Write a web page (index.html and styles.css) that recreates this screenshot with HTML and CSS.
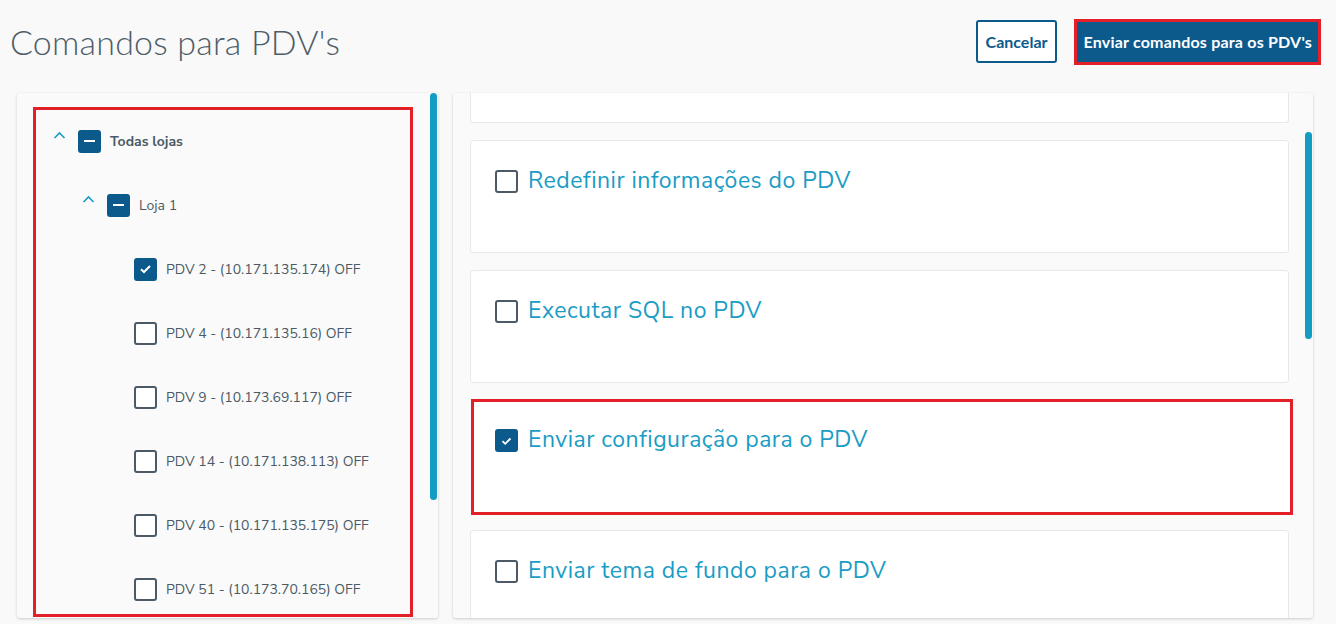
FILE: index.html
```html
<!DOCTYPE html>
<html lang="pt-BR">
<head>
  <meta charset="UTF-8" />
  <title>Comandos para PDV's</title>
  <link rel="stylesheet" href="styles.css">
</head>
<body>

  <!-- Cabeçalho -->
  <header class="top">
    <h1 class="title">Comandos para PDV's</h1>
    <div class="actions">
      <button class="btn btn-outline">Cancelar</button>
      <div class="mark mark-btn">
        <button class="btn btn-primary">Enviar comandos para os PDV's</button>
      </div>
    </div>
  </header>

  <main class="content">

    <!-- Árvore de lojas -->
    <section class="panel panel-left">
      <div class="mark mark-tree">
        <div class="tree-row lvl-0">
          <span class="chev"><svg width="13" height="8" viewBox="0 0 13 8"><path d="M1.5 7 L6.5 2 L11.5 7" fill="none" stroke="#1a9cc4" stroke-width="1.6"/></svg></span>
          <span class="box box-fill"><i class="minus"></i></span>
          <span class="tree-label strong">Todas lojas</span>
        </div>
        <div class="tree-row lvl-1">
          <span class="chev"><svg width="13" height="8" viewBox="0 0 13 8"><path d="M1.5 7 L6.5 2 L11.5 7" fill="none" stroke="#1a9cc4" stroke-width="1.6"/></svg></span>
          <span class="box box-fill"><i class="minus"></i></span>
          <span class="tree-label">Loja 1</span>
        </div>
        <div class="tree-row lvl-2">
          <span class="box box-fill"><svg width="13" height="10" viewBox="0 0 13 10"><path d="M2 5.2 L5 8 L11 2" fill="none" stroke="#fff" stroke-width="2"/></svg></span>
          <span class="tree-label">PDV 2 - (10.171.135.174) OFF</span>
        </div>
        <div class="tree-row lvl-2">
          <span class="box"></span>
          <span class="tree-label">PDV 4 - (10.171.135.16) OFF</span>
        </div>
        <div class="tree-row lvl-2">
          <span class="box"></span>
          <span class="tree-label">PDV 9 - (10.173.69.117) OFF</span>
        </div>
        <div class="tree-row lvl-2">
          <span class="box"></span>
          <span class="tree-label">PDV 14 - (10.171.138.113) OFF</span>
        </div>
        <div class="tree-row lvl-2">
          <span class="box"></span>
          <span class="tree-label">PDV 40 - (10.171.135.175) OFF</span>
        </div>
        <div class="tree-row lvl-2">
          <span class="box"></span>
          <span class="tree-label">PDV 51 - (10.173.70.165) OFF</span>
        </div>
      </div>
      <span class="scroll scroll-left"></span>
    </section>

    <!-- Lista de comandos -->
    <section class="panel panel-right">
      <div class="cmd-list">
        <div class="cmd cmd-cut"></div>
        <div class="cmd">
          <span class="box"></span>
          <span class="cmd-label">Redefinir informações do PDV</span>
        </div>
        <div class="cmd">
          <span class="box"></span>
          <span class="cmd-label">Executar SQL no PDV</span>
        </div>
        <div class="cmd cmd-marked">
          <span class="box box-fill"><svg width="13" height="10" viewBox="0 0 13 10"><path d="M2.5 5.2 L5.2 7.8 L10.5 2.5" fill="none" stroke="#fff" stroke-width="1.8"/></svg></span>
          <span class="cmd-label">Enviar configuração para o PDV</span>
        </div>
        <div class="cmd">
          <span class="box"></span>
          <span class="cmd-label">Enviar tema de fundo para o PDV</span>
        </div>
      </div>
      <span class="scroll scroll-right"></span>
    </section>

  </main>
</body>
</html>
```

FILE: styles.css
```css
/* Общие настройки */
*, *::before, *::after { box-sizing: border-box; }
html, body { height: 100%; }
body {
  margin: 0;
  background: #f9f9f9;
  overflow: hidden;
  font-family: "Nunito Sans", Lato, "Open Sans", sans-serif;
  color: #4b5a66;
}

/* Cabeçalho */
.top {
  display: flex;
  justify-content: space-between;
  align-items: center;
  height: 93px;
  padding: 0 15px 10px 10px;
}
.title {
  margin: 0;
  font-family: Lato, sans-serif;
  font-weight: 300;
  font-size: 34px;
  color: #4e5d68;
  letter-spacing: 0.2px;
}
.actions {
  display: flex;
  align-items: center;
  gap: 17px;
}
.btn {
  font-family: Lato, sans-serif;
  font-weight: 700;
  font-size: 16px;
  border-radius: 3px;
  cursor: pointer;
}
.btn-outline {
  height: 43px;
  padding: 0 8px;
  background: #fff;
  color: #0c5a8c;
  border: 2px solid #0c5a8c;
}
.btn-primary {
  height: 40px;
  padding: 0 6px;
  background: #0c5a8c;
  color: #fff;
  border: none;
  border-radius: 0;
  letter-spacing: 0.2px;
}

/* Marcações vermelhas */
.mark { border: 3px solid #e32027; }
.mark-btn { display: flex; }

/* Painéis */
.content {
  display: flex;
  gap: 15px;
  padding-left: 17px;
}
.panel {
  position: relative;
  height: 525px;
  background: #fafafa;
  border-radius: 3px;
  box-shadow: 0 1px 3px rgba(0,0,0,0.18);
  overflow: hidden;
}
.panel-left { width: 421px; padding: 15px 0 0 16px; }
.panel-right { width: 860px; padding: 0 24px 0 17px; }

.scroll {
  position: absolute;
  width: 7px;
  border-radius: 4px;
  background: #119ec2;
}
.scroll-left { right: 1px; top: 0; height: 407px; }
.scroll-right { right: 1px; top: 39px; height: 207px; }

/* Árvore */
.mark-tree {
  width: 380px;
  height: 510px;
  margin-top: -1px;
}
.mark-tree > :first-child { margin-top: -1px; }
.tree-row {
  display: flex;
  align-items: center;
  height: 64px;
}
.lvl-0 { padding-left: 15px; }
.lvl-1 { padding-left: 44px; }
.lvl-2 { padding-left: 98px; }
.chev {
  display: flex;
  width: 13px;
  margin: -12px 12px 0 2px;
}
.box {
  flex: none;
  display: flex;
  align-items: center;
  justify-content: center;
  width: 23px;
  height: 23px;
  border: 2px solid #4b5a66;
  border-radius: 3px;
  background: #fff;
}
.box-fill {
  border: none;
  background: #0c5a8c;
}
.minus {
  width: 11px;
  height: 2px;
  background: #fff;
}
.tree-label {
  margin-left: 9px;
  font-size: 14px;
  color: #4b5a66;
}
.tree-label.strong { font-weight: 700; }

/* Comandos */
.cmd-list {
  display: flex;
  flex-direction: column;
  gap: 17px;
}
.cmd {
  display: flex;
  align-items: flex-start;
  flex: none;
  height: 113px;
  padding: 29px 0 0 24px;
  background: #fff;
  border: 1px solid #e8e8e8;
  border-radius: 3px;
}
.cmd-cut {
  height: 29px;
  border-top: none;
  border-radius: 0 0 3px 3px;
}
.cmd-marked {
  height: 116px;
  margin: -1px -4px -2px 1px;
  border: 3px solid #e32027;
  border-radius: 0;
  padding: 27px 0 0 21px;
}
.cmd-label {
  margin: -5px 0 0 10px;
  font-size: 23px;
  color: #1a9cc4;
  letter-spacing: 0.5px;
}
```
